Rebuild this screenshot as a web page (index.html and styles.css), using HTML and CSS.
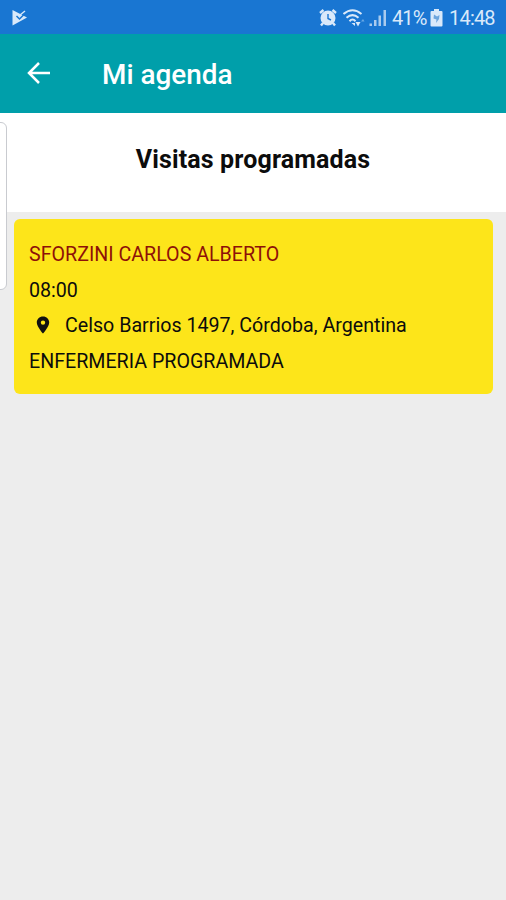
FILE: index.html
```html
<!DOCTYPE html>
<html lang="es">
<head>
    <meta charset="UTF-8">
    <meta name="viewport" content="width=device-width, initial-scale=1.0">
    <title>Mi agenda</title>

    <link rel="stylesheet" href="styles.css">
</head>
<body>
<div class="status-bar">
    <svg class="play" width="16" height="18" viewBox="0 0 16 18">
        <path d="M0.500 1 L15 8.500 L0.500 16.500 Z" fill="#d9e9fa"/>
        <path d="M4.500 7 L7.500 10 L13.500 4" fill="none" stroke="#1976d2" stroke-width="1.500"/>
        <path d="M8 6 L13 2" fill="none" stroke="#d9e9fa" stroke-width="1.500"/>
    </svg>
    <div class="status-right">
        <svg class="alarm" width="18" height="18" viewBox="0 0 18 18">
            <path d="M1 4 L4.5 1 M17 4 L13.500 1 M4 14 L2 16.500 M14 14 L16 16.500" stroke="#d9e9fa" stroke-width="2.400"/>
            <circle cx="9" cy="9" r="7.500" fill="#d9e9fa"/>
            <path d="M9 5 V9.500 L12 11" fill="none" stroke="#1976d2" stroke-width="1.400"/>
        </svg>
        <svg class="wifi" width="22" height="18" viewBox="0 0 22 18">
            <g fill="none" stroke="#d9e9fa" stroke-width="2">
                <path d="M0.500 5 Q9.500 -2.500 18.500 5"/>
                <path d="M3.500 8.800 Q9.500 3.500 15.500 8.800"/>
                <path d="M6.500 12.200 Q9.500 9 12.500 12.200"/>
            </g>
            <path d="M8.500 14 H12 V17 Z M12.500 13 H17.500 L15 17.500 Z" fill="#d9e9fa"/>
            <path d="M18 12.500 L20 10 L21.500 12.500 Z" fill="#69a8e4"/>
        </svg>
        <svg class="signal" width="18" height="18" viewBox="0 0 18 18">
            <path d="M0.500 14.500 H3 V17 H0.500 Z M5 11 H7.500 V17 H5 Z M9.500 6.500 H12 V17 H9.500 Z M14.500 1 H17 V17 H14.500 Z" fill="#a9cbee"/>
        </svg>
        <span class="percent">41%</span>
        <svg class="battery" width="13" height="18" viewBox="0 0 13 18">
            <path d="M4 0 H9 V2 H11.500 Q12.500 2 12.500 3 V16.500 Q12.500 17.500 11.500 17.500 H1.500 Q0.500 17.500 0.500 16.500 V3 Q0.500 2 1.500 2 H4 Z" fill="#d9e9fa"/>
            <path d="M4 5.500 L7 7.500 L9.500 6 L9 10 L6 14 L6.500 10.500 L3.500 9.500 Z" fill="#6ca5dd"/>
        </svg>
        <span class="clock">14:48</span>
    </div>
</div>

<header class="toolbar">
    <svg class="back" width="24" height="24" viewBox="0 0 24 24">
        <path d="M23 12 H2 M12 2 L2 12 L12 22" fill="none" stroke="#fff" stroke-width="2.500"/>
    </svg>
    <h1>Mi agenda</h1>
</header>

<section class="heading">
    <h2>Visitas programadas</h2>
</section>

<main class="visits">
    <article class="visit">
        <p class="patient">SFORZINI CARLOS ALBERTO</p>
        <p class="hour">08:00</p>
        <div class="address">
            <svg width="14" height="18" viewBox="0 0 14 18">
                <path d="M7 0.500 C3.400 0.500 0.800 3.200 0.800 6.500 C0.800 10.800 7 17.500 7 17.500 C7 17.500 13.200 10.800 13.200 6.500 C13.200 3.200 10.600 0.500 7 0.500 Z M7 4.400 A2.200 2.200 0 1 1 7 8.800 A2.200 2.200 0 1 1 7 4.400 Z" fill="#111" fill-rule="evenodd"/>
            </svg>
            <p>Celso Barrios 1497, Córdoba, Argentina</p>
        </div>
        <p class="service">ENFERMERIA PROGRAMADA</p>
    </article>
</main>

<div class="edge-panel"></div>
</body>
</html>
```
FILE: styles.css
```css
*{
    box-sizing: border-box;
    margin: 0;
    padding: 0;
}

body{
    display: flex;
    flex-direction: column;
    height: 900px;
    overflow: hidden;
    background-color: #ededed;
    color: #0c0c0c;
    font-family: Roboto, sans-serif;
}

svg{
    display: block;
    flex: none;
}

.status-bar{
    display: flex;
    align-items: center;
    justify-content: space-between;
    height: 34px;
    padding: 1px 11px 0 12px;
    background-color: #1976d2;
    color: #d9e9fa;
    font-size: 20px;
}

.status-right{
    display: flex;
    align-items: center;
}

.alarm{
    margin-right: 6px;
}

.wifi{
    margin-right: 4px;
}

.signal{
    margin-right: 5px;
}

.percent{
    width: 34px;
    margin-right: 4px;
    letter-spacing: -0.9px;
}

.battery{
    margin-right: 6px;
}

.clock{
    width: 46px;
    letter-spacing: -0.8px;
}

.toolbar{
    display: flex;
    align-items: center;
    height: 79px;
    padding: 0 27px;
    background-color: #009faa;
    color: #fff;
}

.back{
    margin-bottom: 2px;
}

.toolbar h1{
    margin-left: 51px;
    padding-top: 2px;
    font-size: 27.9px;
    font-weight: 500;
}

.heading{
    height: 99px;
    padding-top: 31px;
    background-color: #fff;
    text-align: center;
}

.heading h2{
    font-size: 25px;
    font-weight: 700;
    line-height: 32px;
    letter-spacing: 0.14px;
}

.visits{
    flex: 1;
    padding: 7px 13px 0 14px;
}

.visit{
    height: 175px;
    padding: 18px 15px;
    border-radius: 6px;
    background-color: #fde51a;
    font-size: 19.65px;
    line-height: 35.5px;
}

.visit p{
    white-space: nowrap;
}

.patient{
    color: #8e1008;
}

.address{
    display: flex;
    align-items: center;
    gap: 15px;
    padding-left: 7px;
}

.address svg{
    margin-bottom: 2px;
}

/* handle of the phone's side panel */
.edge-panel{
    position: absolute;
    top: 122px;
    left: -8px;
    width: 15px;
    height: 168px;
    border: 1px solid #c9cbd0;
    border-radius: 6px;
    background-color: #fff;
}
```
